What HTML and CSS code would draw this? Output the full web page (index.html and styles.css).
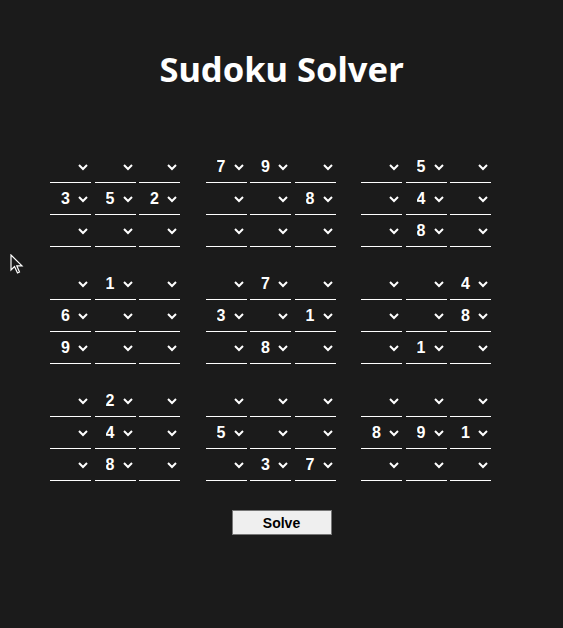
FILE: index.html
```html
<!DOCTYPE html>
<html lang="en">
<head>
<meta charset="utf-8">
<title>Sudoku Solver</title>
<link rel="stylesheet" href="styles.css">
</head>
<body>
<h1 class="title">Sudoku Solver</h1>
<div class="board" id="board"></div>
<div class="actions"><button class="solve">Solve</button></div>
<svg class="cursor" width="14" height="21" viewBox="0 0 14 21"><path d="M1 1 L1 16 L4.5 12.5 L7.5 19 L9.5 18 L6.8 11.8 L12 11.8 Z" fill="#1b1b1b" stroke="#fff" stroke-width="1.2" stroke-linejoin="miter"/></svg>
<script src="app.js"></script>
</body>
</html>
```
FILE: app.js
```js
var puzzle = [
  "000790050",
  "352008040",
  "000000080",
  "010070004",
  "600301008",
  "900080010",
  "020000000",
  "040500891",
  "080037000"
];
var board = document.getElementById('board');
for (var br = 0; br < 3; br++) {
  var band = document.createElement('div');
  band.className = 'band';
  for (var bc = 0; bc < 3; bc++) {
    var block = document.createElement('div');
    block.className = 'block';
    for (var r = 0; r < 3; r++) {
      for (var c = 0; c < 3; c++) {
        var v = puzzle[br * 3 + r][bc * 3 + c];
        var s = document.createElement('select');
        s.className = 'cell';
        var o0 = document.createElement('option');
        o0.value = ''; o0.textContent = '';
        s.appendChild(o0);
        for (var n = 1; n <= 9; n++) {
          var o = document.createElement('option');
          o.value = n; o.textContent = n;
          if (String(n) === v) o.selected = true;
          s.appendChild(o);
        }
        block.appendChild(s);
      }
    }
    band.appendChild(block);
  }
  board.appendChild(band);
}
```
FILE: styles.css
```css
html, body {
  margin: 0;
  padding: 0;
}
body {
  background: #1b1b1b;
  color: #fff;
  font-family: "Liberation Sans", Arial, sans-serif;
  min-height: 628px;
  position: relative;
}
.title {
  margin: 0;
  padding-top: 47px;
  text-align: center;
  font-family: "Noto Sans", sans-serif;
  font-weight: 700;
  font-size: 34.5px;
  line-height: 44px;
  letter-spacing: 0;
}
.board {
  margin: 60px 0 0 50px;
  width: 442px;
  display: flex;
  flex-direction: column;
  gap: 21px;
}
.band {
  display: flex;
  gap: 25.5px;
}
.block {
  display: grid;
  grid-template-columns: repeat(3, 41px);
  column-gap: 3.5px;
  row-gap: 0;
}
.cell {
  width: 41px;
  height: 32px;
  margin: 0;
  padding: 0 0 0 7px;
  border: none;
  border-bottom: 1px solid #fff;
  border-radius: 0;
  background: transparent;
  color: #fff;
  font-family: "Liberation Sans", Arial, sans-serif;
  font-weight: 700;
  font-size: 16px;
  color-scheme: dark;
}
.cell option {
  background: #1b1b1b;
  color: #fff;
}
.actions {
  display: flex;
  justify-content: center;
  padding-top: 29px;
}
.solve {
  width: 100px;
  height: 25px;
  background: #efefef;
  border: 1px solid #767676;
  border-radius: 0;
  color: #000;
  font-family: "Liberation Sans", Arial, sans-serif;
  font-weight: 700;
  font-size: 14px;
  padding: 0;
}
.cursor {
  position: absolute;
  left: 10px;
  top: 254px;
}
```
